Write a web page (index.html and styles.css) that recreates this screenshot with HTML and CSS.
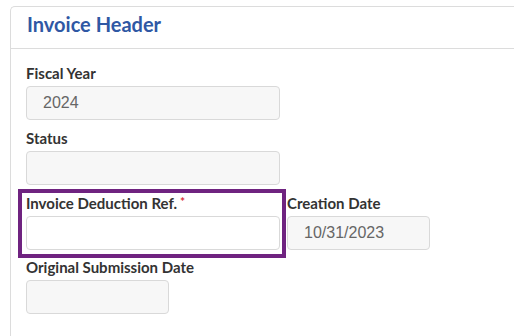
FILE: index.html
```html
<!DOCTYPE html>
<html lang="en">
  <head>
    <meta charset="utf-8" />
    <title>Invoice Header</title>
    <link rel="stylesheet" href="styles.css">
  </head>
  <body>
    <section class="card">
      <h2 class="card-header">Invoice Header</h2>
      <div class="card-body">
        <div class="field wide">
          <label>Fiscal Year</label>
          <div class="input">2024</div>
        </div>
        <div class="field wide">
          <label>Status</label>
          <div class="input"></div>
        </div>
        <div class="row">
          <div class="field wide highlight">
            <label>Invoice Deduction Ref.<span class="req">*</span></label>
            <div class="input white"></div>
          </div>
          <div class="field narrow">
            <label>Creation Date</label>
            <div class="input">10/31/2023</div>
          </div>
        </div>
        <div class="field narrow last">
          <label>Original Submission Date</label>
          <div class="input"></div>
        </div>
      </div>
    </section>
  </body>
</html>
```

FILE: styles.css
```css
body {
  margin: 0;
  overflow: hidden;
  font-family: Lato, 'Liberation Sans', sans-serif;
  background: #fff;
  color: #333;
}

.card {
  margin: 6px 0 0 10px;
  width: 520px;
  min-height: 340px;
  border: 1px solid #dcdcdc;
  border-right: none;
  border-radius: 5px 0 0 0;
}

.card-header {
  margin: 0;
  padding: 3px 0 10px 16px;
  height: 28px;
  line-height: 28px;
  font-size: 20px;
  font-weight: 700;
  color: #2f58a4;
  border-bottom: 1px solid #dcdcdc;
}

.card-body {
  padding: 14px 0 0 15px;
}

.row {
  display: flex;
  gap: 7px;
}

.field {
  margin-bottom: 8px;
}

.field.last {
  margin-top: -1px;
}

.field.wide {
  width: 254px;
}

.field.narrow {
  width: 143px;
}

.field label {
  display: block;
  white-space: nowrap;
  font-size: 15px;
  font-weight: 700;
  line-height: 20px;
  margin-bottom: 3px;
  color: #333;
}

.req {
  position: relative;
  top: -3px;
  color: #d9303a;
  font-size: 12px;
  line-height: 0;
  margin-left: 3px;
}

.input {
  box-sizing: border-box;
  height: 34px;
  padding: 0 16px;
  border: 1px solid #d9d9d9;
  border-radius: 4px;
  background: #f7f7f7;
  font-family: 'Liberation Sans', Arial, sans-serif;
  font-size: 16px;
  line-height: 32px;
  color: #666;
}

.input.white {
  background: #fff;
}

.highlight {
  position: relative;
}

.highlight::before {
  content: "";
  position: absolute;
  top: -4px;
  left: -8px;
  right: -6px;
  bottom: -8px;
  border: 4px solid #6f2380;
  pointer-events: none;
}
```
